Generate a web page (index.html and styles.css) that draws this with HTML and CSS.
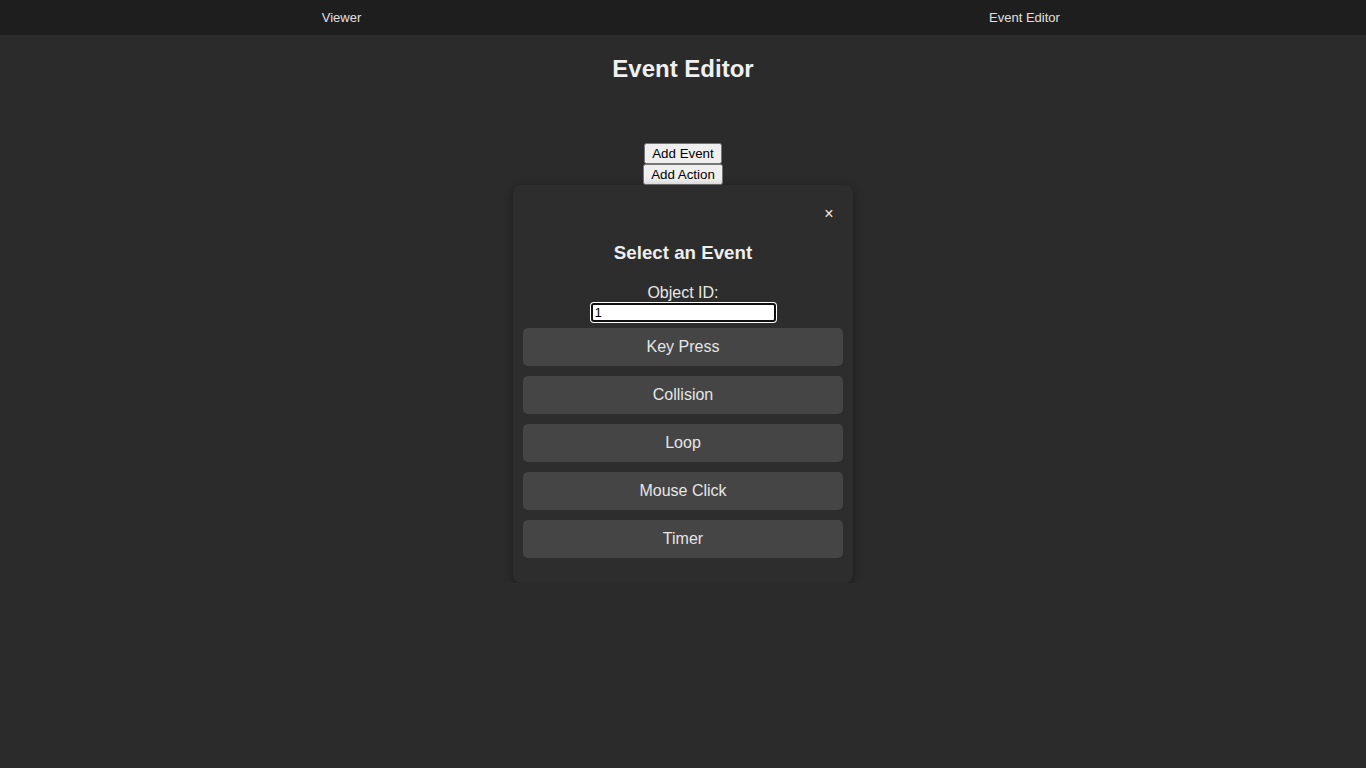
FILE: index.html
```html
<!DOCTYPE html>
<html lang="en">
<head>
<meta charset="utf-8">
<title>Event Editor</title>
<link rel="stylesheet" href="styles.css">
</head>
<body>
<nav class="navbar">
  <a class="nav-item">Viewer</a>
  <a class="nav-item">Event Editor</a>
</nav>
<main class="page">
  <h1 class="title">Event Editor</h1>
  <div class="toolbar">
    <button class="tool-btn">Add Event</button>
    <button class="tool-btn">Add Action</button>
  </div>
  <div class="modal">
    <div class="close-row"><span class="close">&times;</span></div>
    <h3 class="modal-title">Select an Event</h3>
    <label class="field-label" for="objid">Object ID:</label>
    <input id="objid" class="field-input" type="text" value="1">
    <div class="event-list">
      <div class="event-btn">Key Press</div>
      <div class="event-btn">Collision</div>
      <div class="event-btn">Loop</div>
      <div class="event-btn">Mouse Click</div>
      <div class="event-btn">Timer</div>
    </div>
  </div>
</main>
</body>
</html>
```

FILE: styles.css
```css
html, body {
  margin: 0;
  padding: 0;
  background: #2b2b2b;
  color: #e6e6e6;
  font-family: "Liberation Sans", Arial, sans-serif;
}

.navbar {
  display: flex;
  height: 35px;
  background: #1e1e1e;
}

.nav-item {
  flex: 1;
  display: flex;
  align-items: center;
  justify-content: center;
  font-size: 13px;
  color: #e0e0e0;
}

.page {
  display: flex;
  flex-direction: column;
  align-items: center;
}

.title {
  margin: 20px 0 0;
  font-size: 24px;
  line-height: 28px;
  font-weight: bold;
  color: #f0f0f0;
}

.toolbar {
  margin-top: 60px;
  display: flex;
  flex-direction: column;
  align-items: center;
}

.tool-btn {
  font-family: "Liberation Sans", Arial, sans-serif;
  font-size: 13.333px;
  height: 21px;
  padding: 1px 6px;
}

.modal {
  box-sizing: border-box;
  width: 340px;
  padding: 10px 10px 25px;
  background: #2d2d2d;
  border-radius: 8px;
  box-shadow: 0 2px 10px rgba(0, 0, 0, 0.35);
  display: flex;
  flex-direction: column;
  align-items: center;
}

.close-row {
  align-self: stretch;
  height: 37px;
  display: flex;
  justify-content: flex-end;
  align-items: center;
}

.close {
  width: 30px;
  margin-right: -1px;
  text-align: center;
  font-size: 16px;
  line-height: 16px;
  color: #eeeeee;
}

.modal-title {
  margin: 10px 0 20px;
  font-size: 18.72px;
  line-height: 22px;
  font-weight: bold;
  color: #eeeeee;
}

.field-label {
  font-size: 16px;
  line-height: 18px;
  color: #e8e8e8;
}

.field-input {
  box-sizing: border-box;
  margin-top: 1px;
  width: 185px;
  height: 19px;
  padding: 0 2px;
  border: 2px solid #101010;
  border-radius: 3px;
  box-shadow: 0 0 0 1px #ffffff;
  background: #ffffff;
  color: #000000;
  font-family: "Liberation Sans", Arial, sans-serif;
  font-size: 13.333px;
  outline: none;
}

.event-list {
  margin-top: 6px;
  align-self: stretch;
  display: flex;
  flex-direction: column;
  gap: 10px;
}

.event-btn {
  height: 38px;
  display: flex;
  align-items: center;
  justify-content: center;
  background: #454545;
  border-radius: 5px;
  font-size: 16px;
  color: #e6e6e6;
}
```
